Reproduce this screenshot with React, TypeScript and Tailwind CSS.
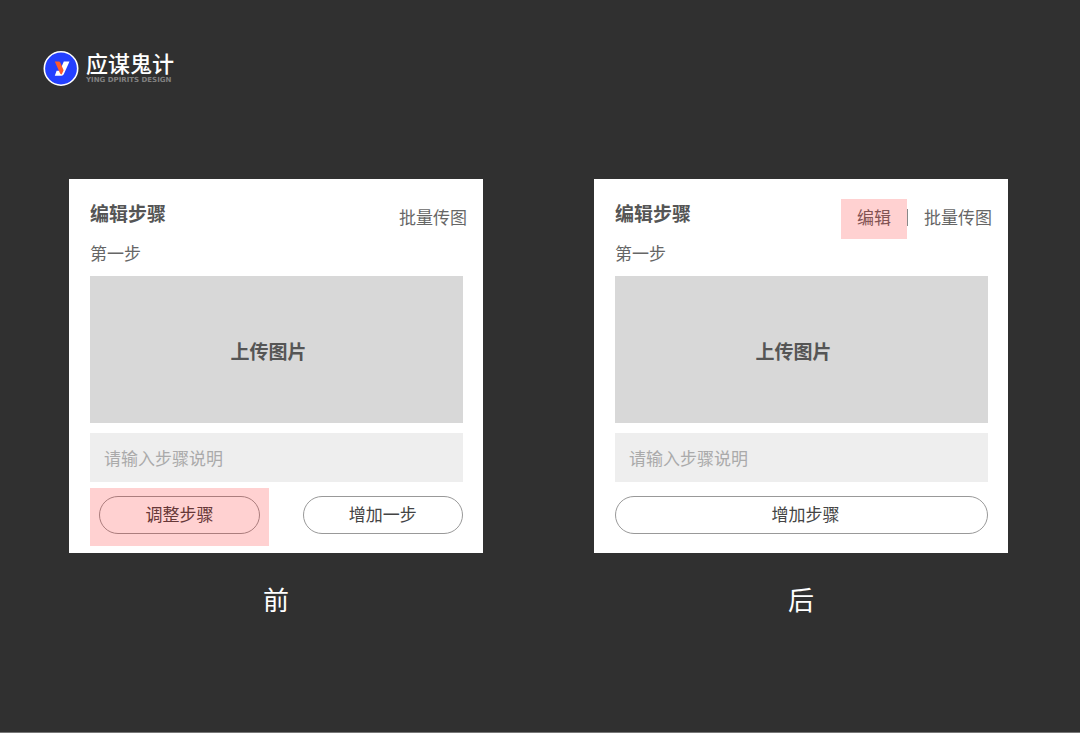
import type { ReactNode } from "react";

type BoxProps = {
  className?: string;
  children: ReactNode;
};

type StepCardProps = {
  caption: string;
  links: ReactNode;
  actions: ReactNode;
};

// 变更区域:在内容上方叠一层半透明红色
function Highlight({ className = "", children }: BoxProps) {
  return (
    <div className={`relative ${className}`}>
      {children}
      <div className="pointer-events-none absolute inset-0 bg-[#ff0000]/18" />
    </div>
  );
}

function PillButton({ className = "", children }: BoxProps) {
  return (
    <button
      type="button"
      className={`h-[38px] rounded-full border border-[#999999] pb-0.5 text-[17px] leading-6 text-[#444444] ${className}`}
    >
      {children}
    </button>
  );
}

function TextLink({ children }: { children: ReactNode }) {
  return (
    <a href="#" className="pb-1 text-[17px] leading-6 text-[#666666]">
      {children}
    </a>
  );
}

function Logo() {
  return (
    <header className="flex items-start gap-[7px] pt-[50px] pl-[43px]">
      <svg viewBox="0 -1 36 36" className="size-9" aria-hidden="true">
        <circle cx="18" cy="17.500" r="16.700" fill="#2440ff" stroke="#ffffff" strokeWidth="1.600" />
        <path d="M20.800 10.500h5.700l-5.600 12.600q-.7 1.600-2.400 1.600h-6.700l1.800-4.900h3.200z" fill="#ffffff" />
        <path d="M11.800 10.500h3.800q1.300 0 1.800 1.200l3.200 7.600-1.900 4.200q-1.200-.2-1.800-1.500z" fill="#ff5a2c" />
      </svg>
      <div>
        <p className="text-[22px] leading-6 font-medium text-white">应谋鬼计</p>
        <p className="font-['DejaVu_Sans',sans-serif] text-[7px] leading-3 font-bold text-[#808080]">
          YING DPIRITS DESIGN
        </p>
      </div>
    </header>
  );
}

function StepCard({ caption, links, actions }: StepCardProps) {
  return (
    <figure className="min-w-0">
      <section className="bg-white pt-5 pb-[7px]">
        <div className="flex items-start justify-between pr-4 pl-[21px]">
          <h2 className="text-[19px] leading-7 font-bold text-[#555555]">编辑步骤</h2>
          <nav className="flex h-10 items-center">{links}</nav>
        </div>
        <div className="pr-5 pl-[21px]">
          <h3 className="text-[17px] leading-7 text-[#666666]">第一步</h3>
          <button
            type="button"
            className="mt-[9px] block h-[147px] w-full bg-[#d8d8d8] pt-1 pr-4 text-[19px] font-bold text-[#555555]"
          >
            上传图片
          </button>
          <input
            type="text"
            aria-label="步骤说明"
            placeholder="请输入步骤说明"
            className="mt-[10px] block h-[49px] w-full bg-[#eeeeee] px-3.5 text-[17px] text-[#444444] placeholder:text-[#aaaaaa]"
          />
          <div className="mt-1.5 flex h-[58px] items-start justify-between">{actions}</div>
        </div>
      </section>
      <figcaption className="mt-[26px] text-center text-[26px] leading-10 text-white">{caption}</figcaption>
    </figure>
  );
}

export default function App() {
  return (
    <div className="flex min-h-screen flex-col border-b border-[#777777] bg-[#303030] font-['Noto_Sans_CJK_SC',sans-serif]">
      <Logo />
      <main className="mt-[93px] grid grid-cols-2 gap-[111px] pr-[72px] pl-[69px]">
        <StepCard
          caption="前"
          links={<TextLink>批量传图</TextLink>}
          actions={
            <>
              <Highlight className="h-full w-[48%] px-[9px] pt-2">
                <PillButton className="w-full">调整步骤</PillButton>
              </Highlight>
              <PillButton className="mt-2 w-[43%]">增加一步</PillButton>
            </>
          }
        />
        <StepCard
          caption="后"
          links={
            <>
              <Highlight className="flex h-10 items-center px-4">
                <TextLink>编辑</TextLink>
              </Highlight>
              <span className="mr-4 mb-1 h-[17px] w-px bg-[#888888]" />
              <TextLink>批量传图</TextLink>
            </>
          }
          actions={<PillButton className="mt-2 w-full pl-2">增加步骤</PillButton>}
        />
      </main>
    </div>
  );
}
